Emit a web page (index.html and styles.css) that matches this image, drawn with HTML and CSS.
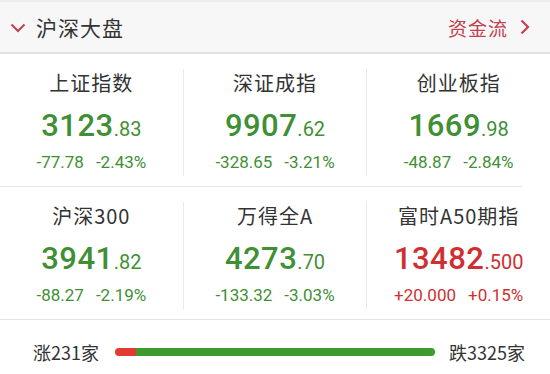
FILE: index.html
```html
<!DOCTYPE html>
<html lang="zh-CN">
<head>
  <meta charset="UTF-8">
  <title>沪深大盘</title>
  <link rel="stylesheet" href="styles.css">
</head>
<body>
  <header class="bar">
    <div class="bar-left">
      <svg class="chev-down" width="16" height="10" viewBox="0 0 16 10"><polyline points="1.5,1.5 8,8 14.5,1.5" fill="none" stroke="#c2414f" stroke-width="2"/></svg>
      <span class="bar-title">沪深大盘</span>
    </div>
    <div class="bar-right">
      <span class="flow">资金流</span>
      <svg class="chev-right" width="10" height="16" viewBox="0 0 10 16"><polyline points="1.5,1.5 8,8 1.5,14.5" fill="none" stroke="#c2414f" stroke-width="2.2"/></svg>
    </div>
  </header>

  <main>
    <div class="row">
      <div class="cell">
        <div class="name">上证指数</div>
        <div class="price down">3123<small>.83</small></div>
        <div class="chg down"><span>-77.78</span><span>-2.43%</span></div>
      </div>
      <div class="divider"></div>
      <div class="cell">
        <div class="name">深证成指</div>
        <div class="price down">9907<small>.62</small></div>
        <div class="chg down"><span>-328.65</span><span>-3.21%</span></div>
      </div>
      <div class="divider"></div>
      <div class="cell">
        <div class="name">创业板指</div>
        <div class="price down">1669<small>.98</small></div>
        <div class="chg down"><span>-48.87</span><span>-2.84%</span></div>
      </div>
    </div>
    <div class="hline"></div>
    <div class="row">
      <div class="cell">
        <div class="name">沪深300</div>
        <div class="price down">3941<small>.82</small></div>
        <div class="chg down"><span>-88.27</span><span>-2.19%</span></div>
      </div>
      <div class="divider"></div>
      <div class="cell">
        <div class="name">万得全A</div>
        <div class="price down">4273<small>.70</small></div>
        <div class="chg down"><span>-133.32</span><span>-3.03%</span></div>
      </div>
      <div class="divider"></div>
      <div class="cell">
        <div class="name">富时A50期指</div>
        <div class="price up">13482<small>.500</small></div>
        <div class="chg up"><span>+20.000</span><span>+0.15%</span></div>
      </div>
    </div>
  </main>

  <footer class="breadth">
    <span class="count">涨231家</span>
    <div class="track">
      <div class="rise" style="width: 6.5%"></div>
      <div class="fall"></div>
    </div>
    <span class="count">跌3325家</span>
  </footer>
</body>
</html>
```

FILE: styles.css
```css
* {
  margin: 0;
  padding: 0;
  box-sizing: border-box;
}
body {
  width: 550px;
  height: 374px;
  overflow: hidden;
  background: #fff;
  color: #333;
  font-family: Roboto, "Noto Sans CJK SC", sans-serif;
}
/* Top bar */
.bar {
  height: 54px;
  display: flex;
  align-items: center;
  justify-content: space-between;
  background: #f7f7f8;
  border-top: 2px solid #ececec;
  border-bottom: 2px solid #e0e0e0;
  padding: 0 20px 0 10px;
}
.bar-left,
.bar-right {
  display: flex;
  align-items: center;
}
.chev-down {
  margin-right: 10px;
  margin-top: 2px;
}
.bar-title {
  font-family: "Noto Sans CJK SC", sans-serif;
  font-size: 21px;
  color: #333;
  letter-spacing: 1px;
}
.flow {
  font-family: "Noto Sans CJK SC", sans-serif;
  font-size: 19px;
  color: #c2414f;
  letter-spacing: 1px;
  margin-right: 12px;
}
/* Index grid */
.row {
  display: flex;
  height: 132px;
}
.cell {
  flex: 1;
  display: flex;
  flex-direction: column;
  align-items: center;
  padding-top: 14px;
}
.divider {
  width: 1px;
  background: #e9e9e9;
  margin: 15px 0 10px;
}
.hline {
  height: 1px;
  background: #e6e6e6;
  margin-right: 28px;
}
.name {
  font-family: "Noto Sans CJK SC", sans-serif;
  font-size: 20px;
  line-height: 30px;
  letter-spacing: 1px;
  color: #333;
}
.price {
  font-size: 31px;
  font-weight: 500;
  line-height: 36px;
  letter-spacing: 0.5px;
  margin-top: 10px;
}
.price small {
  font-size: 20px;
  font-weight: 400;
  letter-spacing: 0;
}
.chg {
  font-size: 17px;
  line-height: 22px;
  margin-top: 4px;
  display: flex;
  gap: 12px;
}
.down {
  color: #3f8f35;
}
.up {
  color: #cf2f31;
}
/* Advance / decline */
.breadth {
  border-top: 1px solid #e6e6e6;
  height: 54px;
  display: flex;
  align-items: center;
  padding: 10px 25px 0 33px;
}
.count {
  font-family: "Noto Sans CJK SC", sans-serif;
  font-size: 18px;
  color: #333;
}
.track {
  flex: 1;
  height: 8px;
  margin: 0 14px 0 16px;
  display: flex;
  border-radius: 4px;
  overflow: hidden;
}
.rise {
  background: #e23a2e;
}
.fall {
  flex: 1;
  background: #3f9a2e;
}
```
